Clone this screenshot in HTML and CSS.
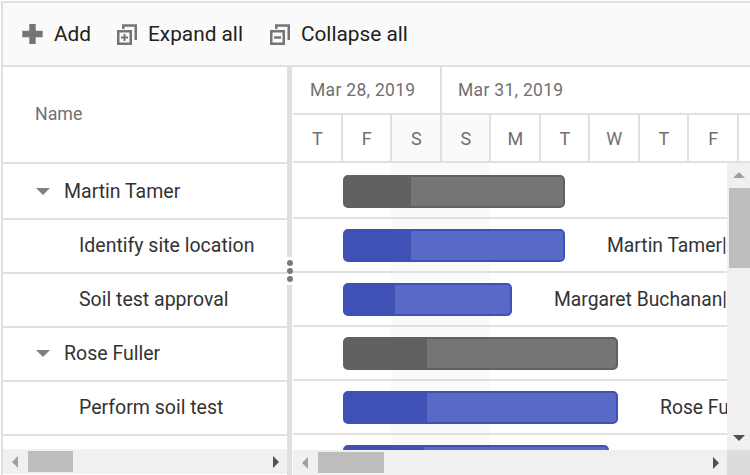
FILE: index.html
```html
<!DOCTYPE html>
<html lang="en">
<head>
  <meta charset="UTF-8" />
  <title>Gantt</title>
  <link rel="stylesheet" href="styles.css">
</head>
<body>
  <div class="gantt">
    <div class="toolbar">
      <div class="tool tool-add">
        <svg class="tool-icon" width="22" height="22" viewBox="0 0 22 22"><path d="M7.300 1h6.400v6.800h7v6.400h-7V21H7.300v-6.800H.3V7.800h7z" fill="#757575"/></svg>
        <span>Add</span>
      </div>
      <div class="tool">
        <svg class="tool-icon" width="22" height="23" viewBox="0 0 22 23" fill="none" stroke="#757575" stroke-width="2.500"><path d="M7.250 6V2.500h12.500V17"/><rect x="2.250" y="8.250" width="12.500" height="12.500"/><path d="M5 14.500h7M8.500 11v7" stroke-width="2"/></svg>
        <span>Expand all</span>
      </div>
      <div class="tool">
        <svg class="tool-icon" width="22" height="23" viewBox="0 0 22 23" fill="none" stroke="#757575" stroke-width="2.500"><path d="M7.250 6V2.500h12.500V17"/><rect x="2.250" y="8.250" width="12.500" height="12.500"/><path d="M5 14.500h7"/></svg>
        <span>Collapse all</span>
      </div>
    </div>

    <div class="panes">
      <section class="tree">
        <div class="tree-head">Name</div>
        <div class="tree-rows">
          <div class="tree-row parent"><i class="caret"></i>Martin Tamer</div>
          <div class="tree-row child">Identify site location</div>
          <div class="tree-row child">Soil test approval</div>
          <div class="tree-row parent"><i class="caret"></i>Rose Fuller</div>
          <div class="tree-row child">Perform soil test</div>
          <div class="tree-row"></div>
        </div>
        <div class="hscroll tree-scroll">
          <i class="arrow left off"></i>
          <div class="thumb"></div>
          <i class="arrow right"></i>
        </div>
      </section>

      <div class="splitter">
        <div class="split-bar top"></div>
        <div class="dots"><b></b><b></b><b></b></div>
        <div class="split-bar"></div>
      </div>

      <section class="chart">
        <div class="dates">
          <div class="date first">Mar 28, 2019</div>
          <div class="date second">Mar 31, 2019</div>
        </div>
        <div class="days">
          <div class="day">T</div>
          <div class="day">F</div>
          <div class="day off-day">S</div>
          <div class="day off-day">S</div>
          <div class="day">M</div>
          <div class="day">T</div>
          <div class="day">W</div>
          <div class="day">T</div>
          <div class="day">F</div>
          <div class="day"></div>
        </div>
        <div class="chart-main">
          <div class="chart-rows">
            <div class="chart-row">
              <div class="bar summary w-222"><div class="progress p-68"></div></div>
            </div>
            <div class="chart-row">
              <div class="bar task w-222"><div class="progress p-68"></div></div>
              <span class="bar-label">Martin Tamer|</span>
            </div>
            <div class="chart-row">
              <div class="bar task w-169"><div class="progress p-52"></div></div>
              <span class="bar-label">Margaret Buchanan|</span>
            </div>
            <div class="chart-row">
              <div class="bar summary w-275"><div class="progress p-84"></div></div>
            </div>
            <div class="chart-row">
              <div class="bar task w-275"><div class="progress p-84"></div></div>
              <span class="bar-label">Rose Fuller|</span>
            </div>
            <div class="chart-row">
              <div class="bar task w-266"><div class="progress p-81"></div></div>
            </div>
          </div>
          <div class="vscroll">
            <i class="arrow up off"></i>
            <div class="vthumb"></div>
            <i class="arrow down"></i>
          </div>
        </div>
        <div class="chart-foot">
          <div class="hscroll chart-scroll">
            <i class="arrow left off"></i>
            <div class="thumb"></div>
            <i class="arrow right"></i>
          </div>
          <div class="corner"></div>
        </div>
      </section>
    </div>
  </div>
</body>
</html>
```

FILE: styles.css
```css
* {
  box-sizing: border-box;
}
html, body {
  margin: 0;
  height: 100%;
  overflow: hidden;
  background: #fff;
}
body {
  padding: 1px 0 0 1px;
  font-family: Roboto, "Liberation Sans", sans-serif;
  color: #333;
}
.gantt {
  width: 749px;
  height: 474px;
  border-top: 2px solid #e0e0e0;
  border-left: 2px solid #e0e0e0;
  display: flex;
  flex-direction: column;
}

/* Toolbar */
.toolbar {
  flex: none;
  height: 64px;
  background: #fafafa;
  border-bottom: 2px solid #e0e0e0;
  display: flex;
  align-items: center;
  padding-left: 19px;
  font-size: 20.800px;
  color: #212121;
}
.tool {
  display: flex;
  align-items: center;
  margin-right: 26px;
}
.tool-add {
  margin-right: 25px;
}
.tool-icon {
  margin-right: 10px;
}

/* Panes */
.panes {
  flex: 1;
  display: flex;
  min-height: 0;
}
.tree {
  flex: none;
  width: 284px;
  display: flex;
  flex-direction: column;
}
.tree-head {
  flex: none;
  height: 97px;
  border-bottom: 2px solid #e0e0e0;
  padding: 0 0 2px 32px;
  display: flex;
  align-items: center;
  font-size: 17.800px;
  color: #707070;
}
.tree-rows {
  flex: 1;
  min-height: 0;
  overflow: hidden;
  padding-top: 2px;
}
.tree-row {
  height: 54px;
  border-bottom: 2px solid #e0e0e0;
  padding-bottom: 2px;
  display: flex;
  align-items: center;
  font-size: 19.500px;
}
.tree-row.parent {
  padding-left: 33px;
}
.tree-row.child {
  padding-left: 76px;
}
.caret {
  width: 0;
  height: 0;
  margin-right: 14px;
  border-left: 7px solid transparent;
  border-right: 7px solid transparent;
  border-top: 7px solid #808080;
}

/* Splitter */
.splitter {
  flex: none;
  width: 6px;
  display: flex;
  flex-direction: column;
}
.split-bar {
  flex: 1;
  width: 5px;
  background: #e0e0e0;
}
.split-bar.top {
  flex: none;
  height: 190px;
}
.dots {
  flex: none;
  height: 28px;
  padding-top: 3px;
  display: flex;
  flex-direction: column;
  gap: 2px;
}
.dots b {
  display: block;
  width: 6px;
  height: 6px;
  border-radius: 50%;
  background: #7b7b7b;
}

/* Chart */
.chart {
  flex: 1;
  min-width: 0;
  display: flex;
  flex-direction: column;
}
.dates {
  flex: none;
  height: 48px;
  border-bottom: 2px solid #e0e0e0;
  display: flex;
}
.date {
  padding-left: 17px;
  display: flex;
  align-items: center;
  font-size: 17.500px;
  color: #707070;
  letter-spacing: 0.3px;
}
.date.first {
  width: 149px;
  border-right: 2px solid #e0e0e0;
}
.date.second {
  padding-left: 16px;
}
.days {
  flex: none;
  height: 48px;
  border-bottom: 2px solid #e0e0e0;
  overflow: hidden;
  display: grid;
  grid-template-columns: repeat(10, 49.500px);
}
.day {
  border-right: 2px solid #e0e0e0;
  padding-left: 1px;
  display: flex;
  align-items: center;
  justify-content: center;
  font-size: 18px;
  color: #707070;
}
.off-day {
  background: #fafafa;
}
.chart-main {
  flex: 1;
  min-height: 0;
  display: flex;
}
.chart-rows {
  flex: 1;
  min-width: 0;
  overflow: hidden;
  padding-top: 2px;
  /* non-working days run down the whole timeline */
  background: linear-gradient(to right, #fff 98px, #fafafa 98px, #fafafa 197px, #fff 197px);
}
.chart-row {
  height: 54px;
  border-bottom: 2px solid #e0e0e0;
  padding-left: 50px;
  display: flex;
  align-items: center;
  white-space: nowrap;
}
.bar {
  flex: none;
  height: 33px;
  border-radius: 5px;
  border: 2px solid;
  overflow: hidden;
}
.bar.summary {
  background: #757575;
  border-color: #616161;
}
.bar.task {
  background: #5869c6;
  border-color: #3f51b5;
}
.progress {
  height: 100%;
}
.summary .progress {
  background: #616161;
}
.task .progress {
  background: #3f51b5;
}
.w-222 { width: 222px; }
.w-169 { width: 169px; }
.w-275 { width: 275px; }
.w-266 { width: 266px; }
.p-68 { width: 66px; }
.p-52 { width: 50px; }
.p-84 { width: 82px; }
.p-81 { width: 79px; }
.bar-label {
  margin-left: 42px;
  font-size: 19.300px;
}

/* Scrollbars */
.hscroll {
  flex: none;
  height: 25px;
  background: #f0f0f0;
  display: flex;
  align-items: center;
  padding: 0 8px 0 9px;
}
.tree-scroll {
  margin-bottom: 1px;
}
.thumb {
  height: 21px;
  background: #bdbdbd;
}
.tree-scroll .thumb {
  width: 45px;
  margin-left: 10px;
}
.chart-scroll .thumb {
  width: 66px;
  margin-left: 10px;
}
.chart-foot {
  flex: none;
  display: flex;
}
.chart-scroll {
  flex: 1;
}
.corner {
  flex: none;
  width: 23px;
  background: #dcdcdc;
}
.arrow {
  flex: none;
  width: 0;
  height: 0;
  border-style: solid;
  border-color: transparent;
}
.arrow.left {
  border-width: 6px 6px 6px 0;
  border-right-color: #505050;
}
.arrow.right {
  margin-left: auto;
  border-width: 6px 0 6px 6px;
  border-left-color: #505050;
}
.arrow.up {
  border-width: 0 6px 6px;
  border-bottom-color: #505050;
}
.arrow.down {
  margin-top: auto;
  border-width: 6px 6px 0;
  border-top-color: #505050;
}
.arrow.left.off {
  border-right-color: #a0a0a0;
}
.arrow.up.off {
  border-bottom-color: #a0a0a0;
}
.vscroll {
  flex: none;
  width: 23px;
  background: #f0f0f0;
  display: flex;
  flex-direction: column;
  align-items: center;
  padding: 9px 0 9px 1px;
}
.vthumb {
  align-self: flex-end;
  width: 21px;
  height: 80px;
  margin-top: 10px;
  background: #bdbdbd;
}
```
